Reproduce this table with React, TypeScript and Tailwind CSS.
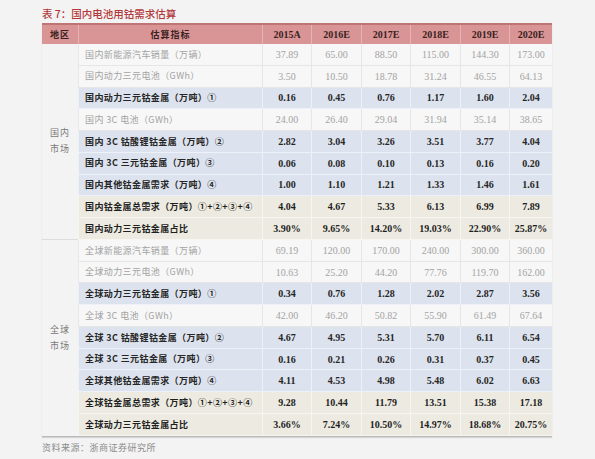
import React from 'react';

type Kind = 'gray' | 'blue' | 'beige';
interface Row {
  label: string;
  kind: Kind;
  values: string[];
}

const years = ['2015A', '2016E', '2017E', '2018E', '2019E', '2020E'];

const domestic: Row[] = [
  { label: '国内新能源汽车销量（万辆）', kind: 'gray', values: ['37.89', '65.00', '88.50', '115.00', '144.30', '173.00'] },
  { label: '国内动力三元电池（GWh）', kind: 'gray', values: ['3.50', '10.50', '18.78', '31.24', '46.55', '64.13'] },
  { label: '国内动力三元钴金属（万吨）①', kind: 'blue', values: ['0.16', '0.45', '0.76', '1.17', '1.60', '2.04'] },
  { label: '国内 3C 电池（GWh）', kind: 'gray', values: ['24.00', '26.40', '29.04', '31.94', '35.14', '38.65'] },
  { label: '国内 3C 钴酸锂钴金属（万吨）②', kind: 'blue', values: ['2.82', '3.04', '3.26', '3.51', '3.77', '4.04'] },
  { label: '国内 3C 三元钴金属（万吨）③', kind: 'blue', values: ['0.06', '0.08', '0.10', '0.13', '0.16', '0.20'] },
  { label: '国内其他钴金属需求（万吨）④', kind: 'blue', values: ['1.00', '1.10', '1.21', '1.33', '1.46', '1.61'] },
  { label: '国内钴金属总需求（万吨）①+②+③+④', kind: 'beige', values: ['4.04', '4.67', '5.33', '6.13', '6.99', '7.89'] },
  { label: '国内动力三元钴金属占比', kind: 'beige', values: ['3.90%', '9.65%', '14.20%', '19.03%', '22.90%', '25.87%'] },
];

const global: Row[] = [
  { label: '全球新能源汽车销量（万辆）', kind: 'gray', values: ['69.19', '120.00', '170.00', '240.00', '300.00', '360.00'] },
  { label: '全球动力三元电池（GWh）', kind: 'gray', values: ['10.63', '25.20', '44.20', '77.76', '119.70', '162.00'] },
  { label: '全球动力三元钴金属（万吨）①', kind: 'blue', values: ['0.34', '0.76', '1.28', '2.02', '2.87', '3.56'] },
  { label: '全球 3C 电池（GWh）', kind: 'gray', values: ['42.00', '46.20', '50.82', '55.90', '61.49', '67.64'] },
  { label: '全球 3C 钴酸锂钴金属（万吨）②', kind: 'blue', values: ['4.67', '4.95', '5.31', '5.70', '6.11', '6.54'] },
  { label: '全球 3C 三元钴金属（万吨）③', kind: 'blue', values: ['0.16', '0.21', '0.26', '0.31', '0.37', '0.45'] },
  { label: '全球其他钴金属需求（万吨）④', kind: 'blue', values: ['4.11', '4.53', '4.98', '5.48', '6.02', '6.63'] },
  { label: '全球钴金属总需求（万吨）①+②+③+④', kind: 'beige', values: ['9.28', '10.44', '11.79', '13.51', '15.38', '17.18'] },
  { label: '全球动力三元钴金属占比', kind: 'beige', values: ['3.66%', '7.24%', '10.50%', '14.97%', '18.68%', '20.75%'] },
];

const rowBg: Record<Kind, string> = {
  gray: 'bg-[#f7f7f7] border-[#e6e6e6]',
  blue: 'bg-[#dde3ee] border-[#eef1f7]',
  beige: 'bg-[#edebe1] border-[#f6f5ef]',
};

const cellText: Record<Kind, string> = {
  gray: 'text-[#a3a3a3] font-normal',
  blue: 'text-[#262626] font-bold',
  beige: 'text-[#1f1f1f] font-bold',
};

function DataRow({ row }: { row: Row }) {
  return (
    <>
      <div
        className={`h-[21.78px] flex items-center pl-[6px] border-b border-l text-[9px] tracking-[0.4px] whitespace-nowrap font-['Noto_Sans_CJK_SC',sans-serif] ${rowBg[row.kind]} ${cellText[row.kind]}`}
      >
        {row.label}
      </div>
      {row.values.map((v, i) => (
        <div
          key={i}
          className={`h-[21.78px] flex items-center justify-center border-b border-l text-[10px] font-['Liberation_Serif',serif] ${rowBg[row.kind]} ${cellText[row.kind]}`}
        >
          {v}
        </div>
      ))}
    </>
  );
}

function Region({ name, last }: { name: string[]; last?: boolean }) {
  return (
    <div
      className={`row-span-9 flex flex-col items-center justify-center text-[9px] text-[#7a7a7a] leading-[16px] tracking-[1px] font-['Noto_Sans_CJK_SC',sans-serif] ${last ? '' : 'border-b border-[#dcdcdc]'}`}
    >
      {name.map((n) => (
        <span key={n}>{n}</span>
      ))}
    </div>
  );
}

export default function App() {
  return (
    <div className="w-[595px] h-[459px] bg-[#f3f3f3] pl-[42px] pt-[6px] overflow-hidden font-['Noto_Sans_CJK_SC',sans-serif]">
      <div className="text-[10.5px] font-medium text-[#b2383a] h-[17px] leading-[15px]">
        表 7：国内电池用钴需求估算
      </div>

      <div className="w-[510px] grid grid-cols-[36px_184px_49px_50px_49px_50px_49px_43px] border-b border-[#b9b9b9] shadow-[0_1px_1px_rgba(0,0,0,0.12)]">
        <div className="col-span-8 grid grid-cols-subgrid h-[21px] bg-[#d99595] border-t-2 border-[#c07575] text-[#3a2222] font-bold">
          <div className="flex items-center justify-center text-[9px] tracking-[1px]">地区</div>
          <div className="flex items-center justify-center text-[9px] tracking-[1px] border-l border-[#e6b4b4]">估算指标</div>
          {years.map((y) => (
            <div key={y} className="flex items-center justify-center text-[10px] border-l border-[#e6b4b4] font-['Liberation_Serif',serif]">
              {y}
            </div>
          ))}
        </div>

        <Region name={['国内', '市场']} />
        {domestic.map((r) => (
          <DataRow key={r.label} row={r} />
        ))}

        <Region name={['全球', '市场']} last />
        {global.map((r) => (
          <DataRow key={r.label} row={r} />
        ))}
      </div>

      <div className="mt-[4px] text-[9px] text-[#8c8c8c] tracking-[0.5px]">
        资料来源：浙商证券研究所
      </div>
    </div>
  );
}
